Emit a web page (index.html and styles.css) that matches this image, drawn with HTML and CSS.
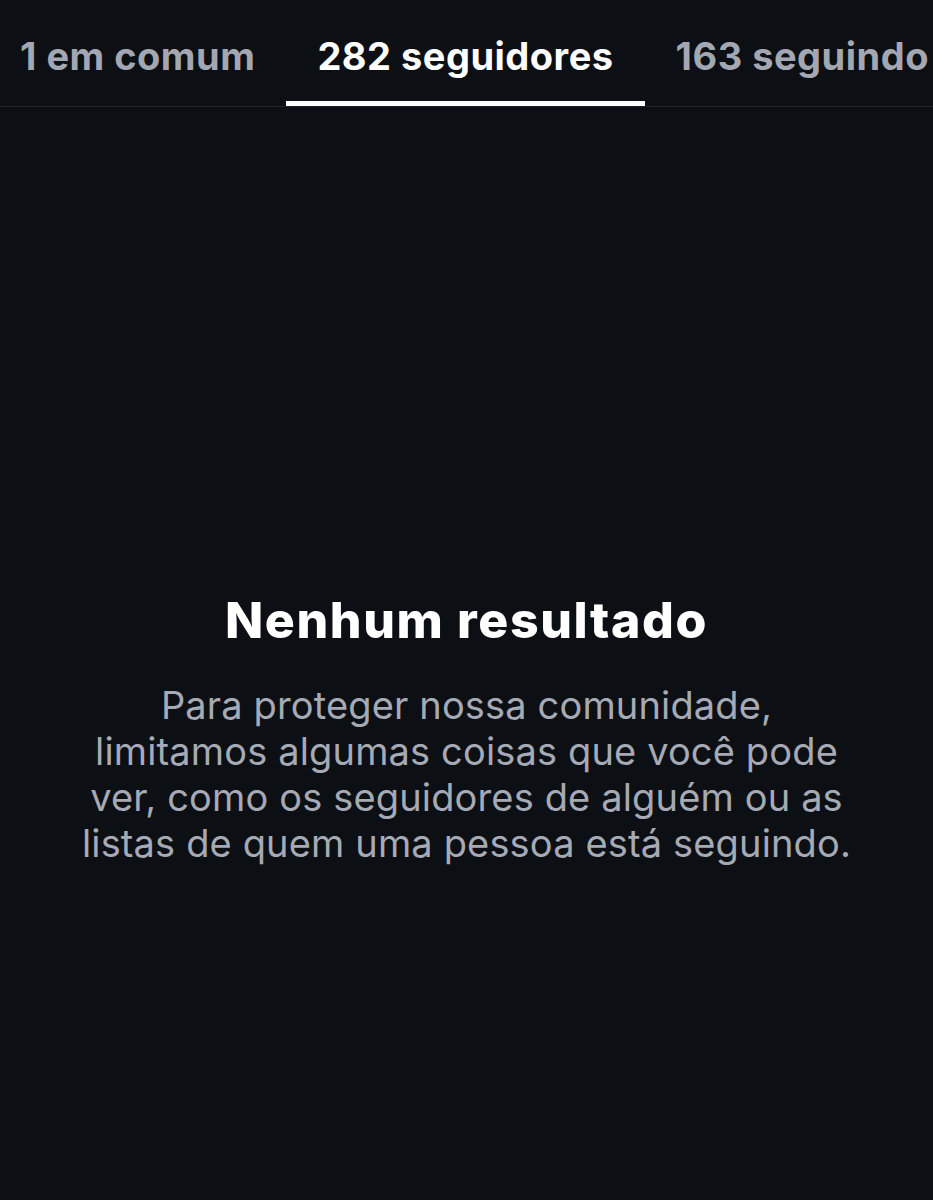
FILE: index.html
```html
<!DOCTYPE html>
<html lang="pt">
<head>
    <meta charset="UTF-8">
    <meta name="viewport" content="width=device-width, initial-scale=1.0">
    <title>Seguidores</title>
    <link rel="stylesheet" href="styles.css">
</head>
<body>

    <nav class="tabs">
        <div class="tab-strip">
            <a class="tab">1 em comum</a>
            <a class="tab active">282 seguidores</a>
            <a class="tab">163 seguindo</a>
        </div>
    </nav>

    <main class="empty">
        <h1 class="empty-title">Nenhum resultado</h1>
        <p class="empty-text">Para proteger nossa comunidade, limitamos algumas coisas que você pode ver, como os seguidores de alguém ou as listas de quem uma pessoa está seguindo.</p>
    </main>

</body>
</html>
```

FILE: styles.css
```css
body {
    margin: 0;
    height: 1200px;
    background-color: #0c0f13;
    color: #ffffff;
    font-family: Inter, "Noto Sans", sans-serif;
    overflow: hidden;
}
.tabs {
    border-bottom: 1px solid #1f2328;
    overflow: hidden;
}
.tab-strip {
    display: flex;
    margin-left: -11px;
    white-space: nowrap;
}
.tab {
    display: block;
    padding: 0 31px;
    height: 106px;
    line-height: 112px;
    font-size: 38px;
    font-weight: 700;
    letter-spacing: 0.5px;
    color: #a3a7b1;
    box-sizing: border-box;
}
.tab.active {
    color: #ffffff;
    border-bottom: 5px solid #ffffff;
}
.empty {
    display: flex;
    flex-direction: column;
    align-items: center;
    padding: 483px 0 0;
    text-align: center;
}
.empty-title {
    margin: 0;
    font-size: 50px;
    font-weight: 800;
    letter-spacing: 1.6px;
    line-height: 60px;
}
.empty-text {
    max-width: 770px;
    margin: 32px 0 0;
    font-size: 38px;
    font-weight: 400;
    line-height: 46px;
    letter-spacing: 0.15px;
    color: #a6aab4;
}
```
